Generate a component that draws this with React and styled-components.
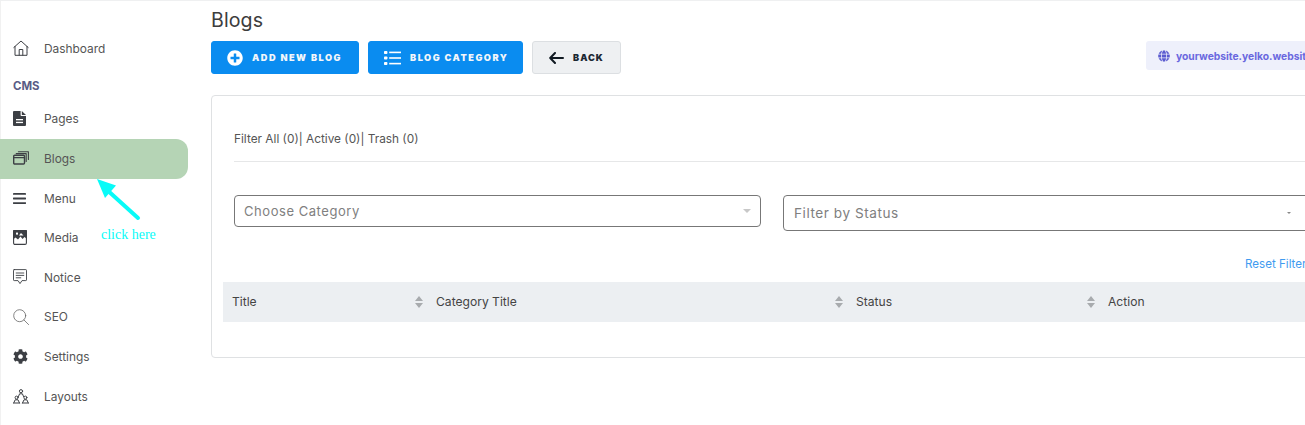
import React from "react";
import styled, { createGlobalStyle } from "styled-components";
import { FaCog, FaPlusCircle, FaGlobe } from "react-icons/fa";

const Global = createGlobalStyle`
  html, body { margin: 0; padding: 0; background: #fff; }
  body { font-family: Inter, "Open Sans", Arial, sans-serif; color: #444; overflow: hidden; }
  * { box-sizing: border-box; }
`;

const Page = styled.div`
  position: relative; width: 1305px; height: 425px; overflow: hidden; display: flex;
  border-top: 1px solid #eff0f1; background: #fff;
`;
const Sidebar = styled.nav`
  flex: 0 0 188px; width: 188px; padding-top: 28px; border-left: 1px solid #f1f1f1;
  margin-right: 23px; display: flex; flex-direction: column;
`;
const NavItem = styled.div`
  height: 39.6px; display: flex; align-items: center; padding: 0 0 1px 13px;
  margin-left: -1px; font-size: 11.9px; color: #555; flex: none;
  background: ${p => (p.$active ? "#b5d4b5" : "transparent")};
  border-radius: ${p => (p.$active ? "0 12px 12px 0" : "0")};
`;
const NavIcon = styled.span`
  width: 31px; display: flex; align-items: center; color: #3c3f44;
  svg { display: block; }
`;
const SectionLabel = styled.div`
  height: 31px; padding: 10px 0 0 12px; font-size: 11.4px; line-height: 14px; font-weight: 700;
  color: #5a5c86; flex: none;
`;
const Main = styled.main`
  flex: 0 0 1130px; width: 1130px; display: flex; flex-direction: column;
`;
const Title = styled.h1`
  margin: 0; height: 40px; padding-top: 7px; font-size: 19.6px; line-height: 24px; font-weight: 400;
  color: #3d3d3d; letter-spacing: 0.1px;
`;
const Toolbar = styled.div`
  display: flex; align-items: flex-start; gap: 9px; height: 54px;
`;
const Button = styled.div`
  height: 33px; width: ${p => p.$w}px; display: flex; align-items: center; border-radius: 3px;
  padding-left: ${p => p.$pad}px; gap: ${p => p.$gap}px;
  font-size: 9.2px; font-weight: 900; letter-spacing: ${p => (p.$light ? "1px" : "1.5px")}; white-space: nowrap;
  background: ${p => (p.$light ? "#eef0f2" : "#0a8cf0")};
  color: ${p => (p.$light ? "#1c2733" : "#f2f6fa")};
  border: 1px solid ${p => (p.$light ? "#dcdfe2" : "#0a8cf0")};
  svg { display: block; flex: none; }
`;
const Domain = styled.div`
  margin-left: auto; height: 29px; width: 195px; display: flex; align-items: center; gap: 6px;
  padding-left: 12px; border-radius: 3px; background: #eef0fb; color: #6a68df;
  font-size: 10.3px; font-weight: 700; white-space: nowrap; overflow: hidden; flex: none;
`;
const Card = styled.section`
  height: 263px; border: 1px solid #dfe1e3; border-radius: 4px; padding: 0 22px 0 11px;
  display: flex; flex-direction: column;
`;
const FilterTabs = styled.div`
  height: 66px; margin-left: 11px; padding-top: 36px; font-size: 11.85px; line-height: 14px;
  color: #555; border-bottom: 1px solid #e6e7e8; flex: none;
`;
const Filters = styled.div`
  display: grid; grid-template-columns: 527px 1fr; column-gap: 22px; margin: 33px 0 0 11px;
  align-items: start; height: 36px; flex: none;
`;
const Select = styled.div`
  height: ${p => p.$h}px; border: 1px solid #777; border-radius: 4px; display: flex;
  align-items: center; justify-content: space-between; padding: 0 ${p => p.$pr}px 0 ${p => p.$pl}px;
  font-size: ${p => p.$fs}px; letter-spacing: 0.55px; color: #808080;
`;
const Caret = styled.span`
  width: 0; height: 0; border-left: ${p => p.$s}px solid transparent; border-right: ${p => p.$s}px solid transparent;
  border-top: ${p => p.$s}px solid ${p => p.$c};
`;
const ResetRow = styled.div`
  height: 51px; padding: 26px 0 0 1022px; font-size: 11.6px; line-height: 14px; color: #3f9bf0; white-space: nowrap; flex: none;
`;
const TableHead = styled.div`
  height: 40px; background: #eceff2; display: grid; grid-template-columns: 204px 420px 252px 1fr;
  align-items: center; flex: none;
`;
const Col = styled.div`
  display: flex; align-items: center; justify-content: space-between; padding: 0 4.5px 1px 9px;
  font-size: 12.1px; color: #444;
`;
const Sort = styled.svg`
  display: block; flex: none;
`;
const ArrowOverlay = styled.svg`
  position: absolute; left: 92px; top: 176px; pointer-events: none;
`;
const ClickHere = styled.div`
  position: absolute; left: 101px; top: 226px; font-family: "Liberation Serif", serif; font-size: 14px;
  line-height: 16px; color: #08fbf8; white-space: nowrap;
`;

const S = { fill: "none", stroke: "currentColor", strokeLinecap: "round", strokeLinejoin: "round" };

const House = () => (
  <svg width="16" height="16" viewBox="0 0 16 16" {...S} strokeWidth="1">
    <path d="M.8 7.5 8 1l7.2 6.5M2 6.5v8.8h12V6.5" /><path d="M6.2 15.2V9.5h3.6v5.7" />
  </svg>
);
const FileIcon = () => (
  <svg width="13" height="15" viewBox="0 0 13 15" fill="currentColor">
    <path d="M1 0h6.6v4.2c0 .4.3.7.7.7H13v9a1 1 0 0 1-1 1H1a1 1 0 0 1-1-1V1a1 1 0 0 1 1-1z" />
    <path d="M8.8 0 13 3.9H8.8z" />
    <rect x="3" y="8" width="7" height="1.3" fill="#fff" /><rect x="3" y="10.8" width="7" height="1.3" fill="#fff" />
  </svg>
);
const Stack = () => (
  <svg width="16" height="14" viewBox="0 0 16 14" {...S} strokeWidth="1.1">
    <rect x="0.7" y="4.3" width="10.8" height="8.7" rx="1" strokeWidth="1.4" />
    <path d="M.9 6.6h10.4" /><path d="M3.2 2.6h10v7.8" /><path d="M5.4.8h10v7.6" />
  </svg>
);
const Bars = () => (
  <svg width="13" height="11" viewBox="0 0 13 11" fill="currentColor">
    <rect y="0" width="13" height="1.8" rx=".4" /><rect y="4.6" width="13" height="1.8" rx=".4" /><rect y="9.2" width="13" height="1.8" rx=".4" />
  </svg>
);
const Media = () => (
  <svg width="14" height="15" viewBox="0 0 14 15">
    <path fill="currentColor" d="M1.5 0H6l1 1 1-1h4.5A1.2 1.2 0 0 1 14 1.2V9l-2.5-2L9.5 9 7.5 6.5 5 9.5 2.5 7.5 0 9.5V1.2A1.2 1.2 0 0 1 1.5 0z" />
    <rect x="3" y="2.6" width="2" height="2" fill="#fff" /><path fill="#fff" d="M8 3l2.5 2.5H6z" />
    <rect x=".6" y=".6" width="12.8" height="13.8" rx="1.4" fill="none" stroke="currentColor" strokeWidth="1.1" />
  </svg>
);
const Notice = () => (
  <svg width="14" height="16" viewBox="0 0 14 16" {...S} strokeWidth=".9">
    <path d="M1.2.6h11.6a.7.7 0 0 1 .7.7v9.6a.7.7 0 0 1-.7.7H9l-2 3-2-3H1.2a.7.7 0 0 1-.7-.7V1.3a.7.7 0 0 1 .7-.7z" />
    <path d="M3.2 4h7.6M3.2 6.4h7.6M3.2 8.8h4.6" />
  </svg>
);
const Search = () => (
  <svg width="16" height="16" viewBox="0 0 16 16" {...S} strokeWidth=".8" color="#666">
    <circle cx="6.7" cy="6.7" r="6" /><path d="M11 11l4.6 4.6" />
  </svg>
);
const Layouts = () => (
  <svg width="16" height="15" viewBox="0 0 16 15" {...S} strokeWidth="1">
    <circle cx="8" cy="2.2" r="1.6" /><path d="M5.4 7.6 6.6 4.8h2.8l1.2 2.8" />
    <circle cx="3.6" cy="8.6" r="1.5" /><circle cx="12.4" cy="8.6" r="1.5" />
    <path d="M.7 14l1.5-3.2h2.8L6.5 14M.7 14h5.8M9.5 14l1.5-3.2h2.8l1.5 3.2M9.5 14h5.8" />
  </svg>
);
const ListIcon = () => (
  <svg width="17" height="14" viewBox="0 0 17 14" fill="#fff">
    <rect x="0" y="0" width="3.4" height="3" rx=".8" /><rect x="0" y="5.5" width="3.4" height="3" rx=".8" /><rect x="0" y="11" width="3.4" height="3" rx=".8" />
    <rect x="5.2" y=".6" width="11.8" height="1.6" /><rect x="5.2" y="6.2" width="11.8" height="1.6" /><rect x="5.2" y="11.8" width="11.8" height="1.6" />
  </svg>
);
const BackArrow = () => (
  <svg width="15" height="12" viewBox="0 0 15 12" fill="none" stroke="#111a22" strokeWidth="2" strokeLinecap="round" strokeLinejoin="round">
    <path d="M14 6H1.4M6 1 1.2 6 6 11" />
  </svg>
);
const SortIcon = () => (
  <Sort width="8" height="12" viewBox="0 0 8 12" fill="#a8abae">
    <path d="M4 0l4 5H0zM4 12 0 7h8z" />
  </Sort>
);

const nav = [
  { label: "Dashboard", icon: <House /> },
  { section: "CMS" },
  { label: "Pages", icon: <FileIcon /> },
  { label: "Blogs", icon: <Stack />, active: true },
  { label: "Menu", icon: <Bars /> },
  { label: "Media", icon: <Media /> },
  { label: "Notice", icon: <Notice /> },
  { label: "SEO", icon: <Search /> },
  { label: "Settings", icon: <FaCog size={15} /> },
  { label: "Layouts", icon: <Layouts /> },
];

const cols = [
  { label: "Title", sort: true },
  { label: "Category Title", sort: true },
  { label: "Status", sort: true },
  { label: "Action", sort: false },
];

export default function App() {
  return (
    <>
      <Global />
      <Page>
        <Sidebar>
          {nav.map(n =>
            n.section ? (
              <SectionLabel key={n.section}>{n.section}</SectionLabel>
            ) : (
              <NavItem key={n.label} $active={n.active}>
                <NavIcon>{n.icon}</NavIcon>
                {n.label}
              </NavItem>
            )
          )}
        </Sidebar>
        <Main>
          <Title>Blogs</Title>
          <Toolbar>
            <Button $w={148} $pad={15} $gap={9}><FaPlusCircle size={16} color="#fff" />ADD NEW BLOG</Button>
            <Button $w={155} $pad={15} $gap={9}><ListIcon />BLOG CATEGORY</Button>
            <Button $w={89} $pad={16} $gap={9} $light><BackArrow />BACK</Button>
            <Domain><FaGlobe size={12} color="#5b5bd0" />yourwebsite.yelko.website</Domain>
          </Toolbar>
          <Card>
            <FilterTabs>Filter All (0)| Active (0)| Trash (0)</FilterTabs>
            <Filters>
              <Select $h={32} $pr={9} $pl={9} $fs={13}>Choose Category<Caret $s={4} $c="#c8c8c8" /></Select>
              <Select $h={36} $pr={26} $pl={10} $fs={13.6}>Filter by Status<Caret $s={2.5} $c="#888" /></Select>
            </Filters>
            <ResetRow>Reset Filter</ResetRow>
            <TableHead>
              {cols.map(c => (
                <Col key={c.label}>
                  {c.label}
                  {c.sort && <SortIcon />}
                </Col>
              ))}
            </TableHead>
          </Card>
        </Main>
        <ArrowOverlay width="52" height="48" viewBox="0 0 52 48">
          <path d="M46 41 14 12" stroke="#08fbf8" strokeWidth="4" strokeLinecap="round" />
          <path d="M5 2 24 8.5 13 21z" fill="#08fbf8" />
        </ArrowOverlay>
        <ClickHere>click here</ClickHere>
      </Page>
    </>
  );
}
